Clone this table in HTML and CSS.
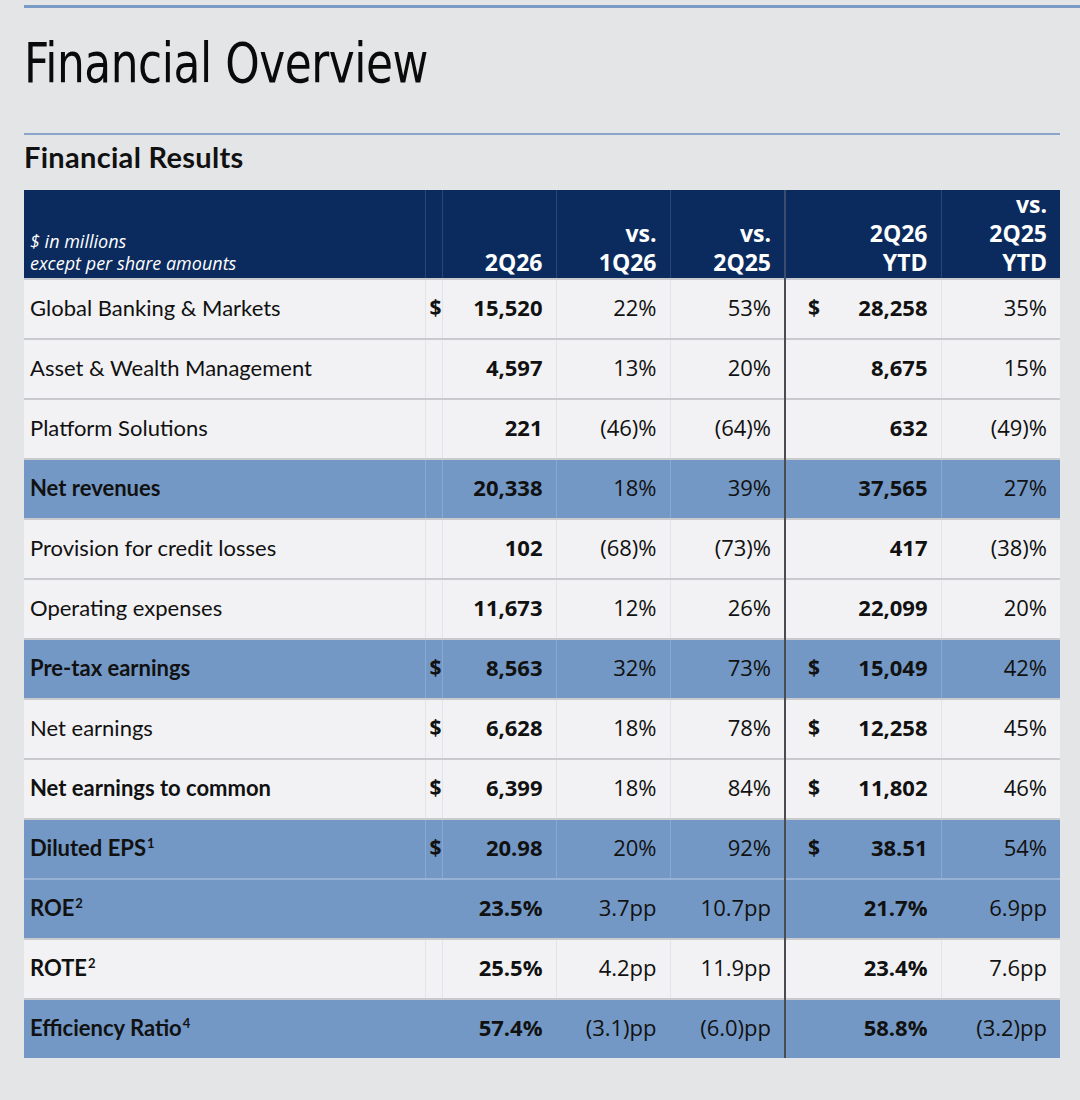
FILE: index.html
```html
<!DOCTYPE html>
<html lang="en">
<head>
<meta charset="utf-8">
<title>Financial Overview</title>
<link rel="stylesheet" href="styles.css">
</head>
<body>
<div class="page">
  <div class="topline"></div>
  <h1 class="title"><span class="title-text">Financial Overview</span></h1>
  <div class="rule"></div>
  <h2 class="subtitle">Financial Results</h2>
  <table class="fin">
    <colgroup>
      <col class="c-label"><col class="c-dol"><col class="c-val"><col class="c-vs"><col class="c-vs2"><col class="c-ytd"><col class="c-vsy">
    </colgroup>
    <thead>
      <tr>
        <th class="units"><em>$ in millions<br>except per share amounts</em></th>
        <th></th>
        <th>2Q26</th>
        <th>vs.<br>1Q26</th>
        <th>vs.<br>2Q25</th>
        <th class="ytd">2Q26<br>YTD</th>
        <th>vs.<br>2Q25<br>YTD</th>
      </tr>
    </thead>
    <tbody>
      <tr class="light">
        <td class="lbl">Global Banking &amp; Markets</td><td class="dol">$</td><td class="num b">15,520</td><td class="num">22%</td><td class="num">53%</td><td class="num b ytd"><span class="ds">$</span>28,258</td><td class="num">35%</td>
      </tr>
      <tr class="light">
        <td class="lbl">Asset &amp; Wealth Management</td><td class="dol"></td><td class="num b">4,597</td><td class="num">13%</td><td class="num">20%</td><td class="num b ytd">8,675</td><td class="num">15%</td>
      </tr>
      <tr class="light">
        <td class="lbl">Platform Solutions</td><td class="dol"></td><td class="num b">221</td><td class="num">(46)%</td><td class="num">(64)%</td><td class="num b ytd">632</td><td class="num">(49)%</td>
      </tr>
      <tr class="blue">
        <td class="lbl b">Net revenues</td><td class="dol"></td><td class="num b">20,338</td><td class="num">18%</td><td class="num">39%</td><td class="num b ytd">37,565</td><td class="num">27%</td>
      </tr>
      <tr class="light">
        <td class="lbl">Provision for credit losses</td><td class="dol"></td><td class="num b">102</td><td class="num">(68)%</td><td class="num">(73)%</td><td class="num b ytd">417</td><td class="num">(38)%</td>
      </tr>
      <tr class="light">
        <td class="lbl">Operating expenses</td><td class="dol"></td><td class="num b">11,673</td><td class="num">12%</td><td class="num">26%</td><td class="num b ytd">22,099</td><td class="num">20%</td>
      </tr>
      <tr class="blue">
        <td class="lbl b">Pre-tax earnings</td><td class="dol">$</td><td class="num b">8,563</td><td class="num">32%</td><td class="num">73%</td><td class="num b ytd"><span class="ds">$</span>15,049</td><td class="num">42%</td>
      </tr>
      <tr class="light">
        <td class="lbl">Net earnings</td><td class="dol">$</td><td class="num b">6,628</td><td class="num">18%</td><td class="num">78%</td><td class="num b ytd"><span class="ds">$</span>12,258</td><td class="num">45%</td>
      </tr>
      <tr class="light">
        <td class="lbl b">Net earnings to common</td><td class="dol">$</td><td class="num b">6,399</td><td class="num">18%</td><td class="num">84%</td><td class="num b ytd"><span class="ds">$</span>11,802</td><td class="num">46%</td>
      </tr>
      <tr class="blue">
        <td class="lbl b">Diluted EPS<sup>1</sup></td><td class="dol">$</td><td class="num b">20.98</td><td class="num">20%</td><td class="num">92%</td><td class="num b ytd"><span class="ds">$</span>38.51</td><td class="num">54%</td>
      </tr>
      <tr class="blue plain">
        <td class="lbl b">ROE<sup>2</sup></td><td class="dol"></td><td class="num b">23.5%</td><td class="num">3.7pp</td><td class="num">10.7pp</td><td class="num b ytd">21.7%</td><td class="num">6.9pp</td>
      </tr>
      <tr class="light">
        <td class="lbl b">ROTE<sup>2</sup></td><td class="dol"></td><td class="num b">25.5%</td><td class="num">4.2pp</td><td class="num">11.9pp</td><td class="num b ytd">23.4%</td><td class="num">7.6pp</td>
      </tr>
      <tr class="blue plain">
        <td class="lbl b">Efficiency Ratio<sup>4</sup></td><td class="dol"></td><td class="num b">57.4%</td><td class="num">(3.1)pp</td><td class="num">(6.0)pp</td><td class="num b ytd">58.8%</td><td class="num">(3.2)pp</td>
      </tr>
    </tbody>
  </table>
</div>
</body>
</html>
```

FILE: styles.css
```css
html, body {
  margin: 0;
  padding: 0;
  background: #e4e5e7;
}

.page {
  padding: 5px 0 30px 24px;
  color: #111;
}

.topline {
  height: 3px;
  background: #7a9bc5;
}

.title {
  margin: 22px 0 0 0;
  font-family: "Liberation Sans Narrow", "DejaVu Sans Condensed", "Liberation Sans", sans-serif;
  font-weight: 400;
  font-size: 56px;
  line-height: 66px;
  color: #0a0a0a;
}

.title-text {
  display: inline-block;
  transform: scaleX(0.87);
  transform-origin: left center;
  letter-spacing: -0.5px;
}

.rule {
  margin: 37px 20px 0 0;
  height: 2px;
  background: #89a5c9;
}

.subtitle {
  margin: 0;
  font-family: Lato, "Open Sans", sans-serif;
  font-weight: 700;
  font-size: 29px;
  letter-spacing: 0.3px;
  line-height: 44px;
  color: #111;
}

.fin {
  margin-top: 11px;
  width: 1036px;
  border-collapse: collapse;
  table-layout: fixed;
  font-family: "Open Sans", "Noto Sans", sans-serif;
  font-size: 22px;
}

.c-label { width: 401px; }
.c-dol { width: 17px; }
.c-val { width: 114px; }
.c-vs { width: 114px; }
.c-vs2 { width: 115px; }
.c-ytd { width: 156px; }
.c-vsy { width: 119px; }

.fin thead th {
  background: #0b2b5e;
  color: #fff;
  height: 88px;
  box-sizing: border-box;
  padding: 0 13px 1px 0;
  vertical-align: bottom;
  text-align: right;
  font-weight: 700;
  font-size: 23px;
  line-height: 29px;
  border-left: 1px solid #2a4774;
}

.fin thead th.units {
  text-align: left;
  padding: 0 0 4px 6px;
  font-weight: 400;
  font-size: 18px;
  line-height: 22px;
  border-left: none;
}

.fin thead th.ytd {
  border-left: 2px solid #3a4d6e;
}

.fin tbody td {
  height: 54px;
  padding: 0 13px 4px 0;
  text-align: right;
  vertical-align: middle;
  line-height: 26px;
  border-top: 2px solid #c9cacd;
  border-left: 1px solid #e3e4e7;
  white-space: nowrap;
}

.fin tbody tr.light td {
  background: #f2f2f4;
}

.fin tbody tr.blue td {
  background: #7398c5;
  border-left-color: #89a9d1;
}

.fin tbody tr.blue + tr.blue td {
  border-top-color: #97b2d4;
}

.fin tbody tr.plain td {
  border-left-color: #7398c5;
}

.fin tbody td.lbl {
  text-align: left;
  padding: 0 0 3px 6px;
  font-family: Lato, "Open Sans", sans-serif;
  font-size: 22px;
  border-left: none;
}

.fin tbody td.dol {
  padding: 0 0 4px 0;
  text-align: right;
  font-weight: 700;
  font-size: 21px;
}

.fin tbody td.b {
  font-weight: 700;
}

.fin tbody td.ytd,
.fin tbody tr.blue td.ytd,
.fin tbody tr.plain td.ytd {
  border-left: 2px solid #4a4c50;
}

.ds {
  float: left;
  margin-left: 22px;
  font-size: 21px;
}

sup {
  font-size: 13px;
  line-height: 0;
  vertical-align: 8px;
  margin-left: 1px;
}
```
